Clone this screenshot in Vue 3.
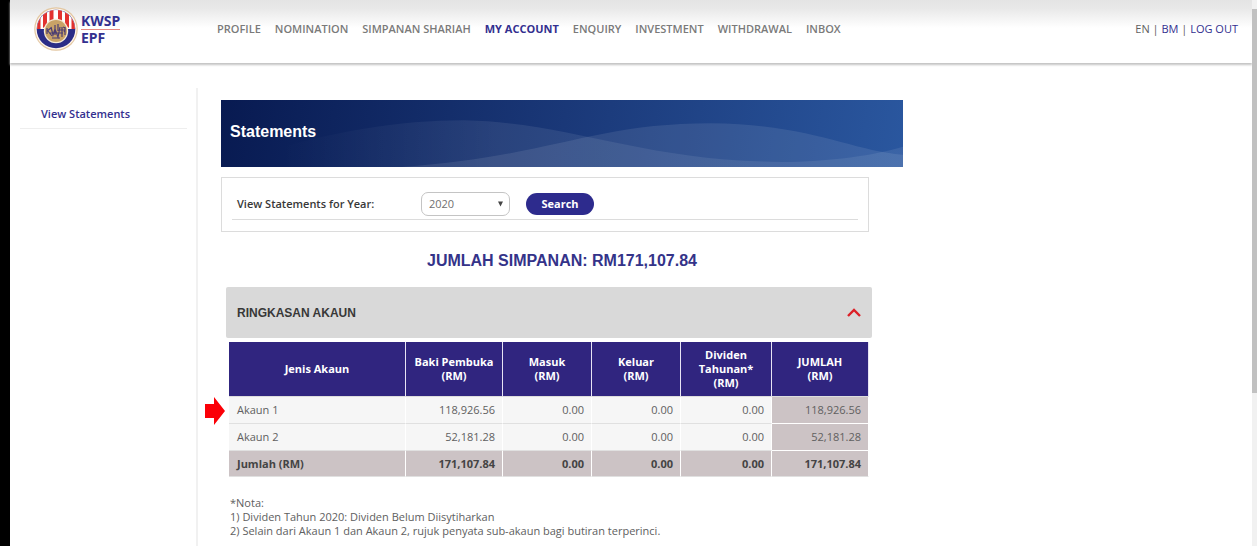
<script setup>
import { ref } from 'vue'

const menu = ['PROFILE', 'NOMINATION', 'SIMPANAN SHARIAH', 'MY ACCOUNT', 'ENQUIRY', 'INVESTMENT', 'WITHDRAWAL', 'INBOX']
const active = 'MY ACCOUNT'
const year = ref('2020')
const years = ['2020', '2019', '2018']
const open = ref(true)

const columns = [
  ['Jenis Akaun'],
  ['Baki Pembuka', '(RM)'],
  ['Masuk', '(RM)'],
  ['Keluar', '(RM)'],
  ['Dividen', 'Tahunan*', '(RM)'],
  ['JUMLAH', '(RM)'],
]
const rows = [
  { name: 'Akaun 1', values: ['118,926.56', '0.00', '0.00', '0.00', '118,926.56'], marked: true },
  { name: 'Akaun 2', values: ['52,181.28', '0.00', '0.00', '0.00', '52,181.28'], marked: false },
]
const total = ['171,107.84', '0.00', '0.00', '0.00', '171,107.84']
</script>

<template>
  <div class="page">
    <div class="edge"></div>
    <div class="site">
      <header class="header">
        <a class="logo" href="#" aria-label="KWSP EPF">
          <svg class="emblem" viewBox="0 0 44 46" aria-hidden="true">
            <defs>
              <clipPath id="top"><path d="M0 0H44V23H0Z" /></clipPath>
              <clipPath id="ring"><circle cx="22" cy="23" r="19" /></clipPath>
            </defs>
            <circle cx="22" cy="23" r="21.8" fill="#e3c7a2" />
            <circle cx="22" cy="23" r="20.6" fill="#fff6ec" />
            <circle cx="22" cy="23" r="19.3" fill="#2b2c86" />
            <g clip-path="url(#ring)">
              <g clip-path="url(#top)">
                <path d="M0 0H44V23H0Z" fill="#fff" />
                <path d="M2 12H6.5V23H2ZM9 6H13V19L9 22ZM15.5 2H19.5V16H15.5ZM24 2H28V16H24ZM31 6H35V22L31 19ZM37.5 12H42V23H37.5Z" fill="#e2322f" />
              </g>
            </g>
            <circle cx="22" cy="25" r="12.2" fill="#f5ead6" />
            <circle cx="22" cy="25" r="11" fill="#c9a267" />
            <path d="M13 22V28M13 25L17 22M14 25L18 30M17 21L19 29L21 23L24 31L26 21M21 19V29M24 18V25M26 24H31M28 21V31M31 21V29M18 32H26M16 27H29M29 21Q33 22 30 26" fill="none" stroke="#4b3d72" stroke-width="1.2" />
          </svg>
          <span class="brand"><span class="brand-top">KWSP</span><span>EPF</span></span>
        </a>
        <nav class="nav">
          <a v-for="item in menu" :key="item" href="#" :class="{ active: item === active }">{{ item }}</a>
        </nav>
        <div class="tools">
          <span>EN</span> | <a href="#">BM</a> | <a href="#">LOG OUT</a>
        </div>
      </header>

      <div class="body">
        <aside class="side"><a href="#">View Statements</a></aside>
        <main class="main">
          <div class="banner">
            <svg class="waves" viewBox="0 0 682 66" preserveAspectRatio="none" aria-hidden="true">
              <defs>
                <linearGradient id="fade" gradientUnits="userSpaceOnUse" x1="60" y1="0" x2="280" y2="0">
                  <stop offset="0" stop-color="#fff" stop-opacity="0" />
                  <stop offset="1" stop-color="#fff" stop-opacity=".08" />
                </linearGradient>
              </defs>
              <path d="M0 66C90 34 170 20 243 20C350 22 420 60 560 61C610 61 655 54 682 46V66Z" fill="url(#fade)" />
              <path d="M180 66C330 56 370 23 490 23C590 24 630 50 682 54V66Z" fill="#fff" fill-opacity=".09" />
            </svg>
            <h1>Statements</h1>
          </div>

          <form class="filter" @submit.prevent>
            <div class="filter-row">
              <label for="year">View Statements for Year:</label>
              <span class="select">
                <select id="year" v-model="year">
                  <option v-for="y in years" :key="y">{{ y }}</option>
                </select>
                <svg viewBox="0 0 6 6" aria-hidden="true"><path d="M0 0H6L3 6Z" fill="#444" /></svg>
              </span>
              <button class="search" type="submit">Search</button>
            </div>
          </form>

          <h2>JUMLAH SIMPANAN: RM171,107.84</h2>

          <section class="summary">
            <button class="toggle" type="button" :aria-expanded="open" @click="open = !open">
              <span>RINGKASAN AKAUN</span>
              <svg viewBox="0 0 14 9" aria-hidden="true"><path d="M1 8L7 2L13 8" fill="none" stroke="#dc2027" stroke-width="2.4" /></svg>
            </button>
            <table v-if="open">
              <colgroup><col /><col class="c-wide" /><col class="c-mid" /><col class="c-mid" /><col class="c-div" /><col class="c-wide" /></colgroup>
              <thead>
                <tr>
                  <th v-for="col in columns" :key="col[0]" scope="col"><span v-for="line in col" :key="line">{{ line }}</span></th>
                </tr>
              </thead>
              <tbody>
                <tr v-for="row in rows" :key="row.name">
                  <th scope="row">
                    {{ row.name }}
                    <svg v-if="row.marked" class="marker" viewBox="0 0 20 28" aria-hidden="true"><path d="M0 7H9V0L20 14L9 28V21H0Z" fill="#fb0007" /></svg>
                  </th>
                  <td v-for="(value, i) in row.values" :key="i">{{ value }}</td>
                </tr>
              </tbody>
              <tfoot>
                <tr>
                  <th scope="row">Jumlah (RM)</th>
                  <td v-for="(value, i) in total" :key="i">{{ value }}</td>
                </tr>
              </tfoot>
            </table>
          </section>

          <div class="notes">
            <p>*Nota:</p>
            <p>1) Dividen Tahun 2020: Dividen Belum Diisytiharkan</p>
            <p>2) Selain dari Akaun 1 dan Akaun 2, rujuk penyata sub-akaun bagi butiran terperinci.</p>
          </div>
        </main>
      </div>
    </div>
    <div class="scroll"><div class="thumb"></div></div>
  </div>
</template>

<style>
body { margin: 0; background: #fff; }
</style>

<style scoped>
.page {
  display: flex;
  height: 100vh;
  overflow: hidden;
  font-family: "Open Sans", "Noto Sans", sans-serif;
  font-size: 11px;
  line-height: 14px;
  color: #606060;
}
a { color: #33308f; text-decoration: none; }
.edge { width: 10px; background: #000; }
.site { flex: 1; min-width: 0; display: flex; flex-direction: column; }
.scroll { width: 5px; padding-top: 9px; box-sizing: border-box; background: #f1f1f1; }
.thumb { height: 384px; max-height: 72%; background: #c1c1c1; }

.header {
  display: flex;
  align-items: center;
  height: 63px;
  padding: 0 14px 5px 24px;
  box-sizing: border-box;
  flex: none;
  background: linear-gradient(#e4e4e4, #e8e8e8 8px, #fff 28px);
  box-shadow: 0 2px 2px #c4c4c4;
}
.logo { display: flex; align-items: center; gap: 3px; width: 183px; flex: none; }
.emblem { width: 44px; height: 46px; }
.brand { display: flex; flex-direction: column; font: bold 14px/16px "Noto Sans", sans-serif; }
.brand-top { border-bottom: 1px solid #e58a85; }
.nav { display: flex; flex: 1; gap: 14px; white-space: nowrap; }
.nav a { color: #7a7a7a; font-weight: 600; }
.nav a.active { color: #33308f; font-weight: 700; }
.tools { white-space: pre; }

.body { flex: 1; display: flex; padding-top: 25px; }
.side { width: 188px; box-sizing: border-box; padding: 0 9px 0 10px; border-right: 2px solid #f1f1f1; flex: none; }
.side a { display: block; padding: 19px 21px 7px; border-bottom: 1px solid #eee; font-weight: 600; }
.main { flex: 1; min-width: 0; max-width: 682px; padding: 12px 23px 0; }

.banner {
  position: relative;
  display: flex;
  align-items: center;
  height: 67px;
  padding-left: 9px;
  background: linear-gradient(100deg, #081a51, #1a3878 50%, #2a579f);
}
.waves { position: absolute; inset: 0; width: 100%; height: 100%; }
h1 { position: relative; margin: 0 0 4px; font: bold 16px/20px "Liberation Sans", sans-serif; color: #fff; }

.filter { margin: 10px 34px 0 0; padding: 10px 10px 11px; border: 1px solid #dcdcdc; }
.filter-row { display: flex; align-items: center; height: 31px; border-bottom: 1px solid #dcdcdc; padding-left: 5px; }
.filter label { width: 184px; font-weight: 600; color: #383838; }
.select { position: relative; width: 89px; margin-right: 16px; }
.select select {
  display: block;
  appearance: none;
  width: 100%;
  height: 24px;
  padding: 0 7px;
  border: 1px solid #c4c4c4;
  border-radius: 7px;
  background: #fff;
  font: inherit;
  color: #707070;
}
.select svg { position: absolute; right: 7px; top: 9px; width: 5px; height: 6px; }
.search { width: 68px; height: 22px; padding: 0; border: 0; border-radius: 11px; background: #2d2b8d; color: #fff; font: inherit; font-weight: 700; }

h2 { margin: 19px 0 16px; font: bold 16px/20px "Liberation Sans", sans-serif; color: #343389; text-align: center; }

.summary { margin: 0 31px 0 5px; }
.toggle {
  display: flex;
  align-items: center;
  justify-content: space-between;
  width: 100%;
  height: 51px;
  padding: 0 11px;
  border: 0;
  border-radius: 2px;
  background: #d9d9d9;
  font: bold 12px/16px "Liberation Sans", sans-serif;
  color: #383838;
}
.toggle svg { width: 14px; height: 9px; }
table { width: calc(100% - 6px); margin: 4px 0 0 3px; border-collapse: separate; border-spacing: 0; table-layout: fixed; }
.c-wide { width: 97px; }
.c-mid { width: 89px; }
.c-div { width: 91px; }
thead th { height: 54px; padding: 0; background: #30257f; color: #fff; border-right: 1px solid #e7e4f4; border-bottom: 1px solid #ddd; font-weight: 700; }
thead span { display: block; }
tbody th, tbody td, tfoot th, tfoot td { height: 26px; padding: 0 7px 0 8px; border-right: 1px solid #fff; border-bottom: 1px solid #e0e0e0; }
tbody th, tbody td { background: #f6f6f6; font-weight: normal; }
tbody th, tfoot th { position: relative; text-align: left; }
td { text-align: right; }
tbody td:last-child { background: #ccc3c5; border-bottom-color: #fff; }
tfoot th, tfoot td { height: 25px; background: #ccc3c5; font-weight: 700; color: #444; }
.marker { position: absolute; left: -24px; top: 0; width: 20px; height: 28px; }

.notes { padding: 19px 9px 0; }
.notes p { margin: 0; }
</style>
